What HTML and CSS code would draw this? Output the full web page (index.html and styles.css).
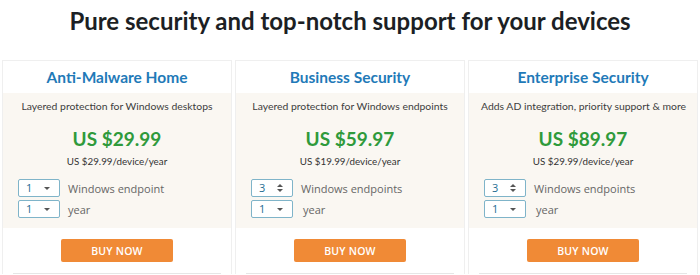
FILE: index.html
```html
<!DOCTYPE html>
<html>
<head>
<meta charset="utf-8">
<link rel="stylesheet" href="styles.css">
</head>
<body>
<h1 class="heading">Pure security and top-notch support for your devices</h1>
<div class="plans">
  <div class="plan">
    <div class="plan-title">Anti-Malware Home</div>
    <div class="plan-body">
      <div class="plan-desc">Layered protection for Windows desktops</div>
      <div class="plan-price">US $29.99</div>
      <div class="plan-unit">US $29.99/device/year</div>
      <div class="opts">
        <div class="opt"><span class="sel">1<span class="arrow"></span></span><span class="opt-label">Windows endpoint</span></div>
        <div class="opt"><span class="sel">1<span class="arrow"></span></span><span class="opt-label">year</span></div>
      </div>
    </div>
    <div class="plan-foot"><button class="buy">BUY NOW</button></div>
  </div>
  <div class="plan">
    <div class="plan-title">Business Security</div>
    <div class="plan-body">
      <div class="plan-desc">Layered protection for Windows endpoints</div>
      <div class="plan-price">US $59.97</div>
      <div class="plan-unit">US $19.99/device/year</div>
      <div class="opts">
        <div class="opt"><span class="sel num">3<span class="spin"><span class="up"></span><span class="dn"></span></span></span><span class="opt-label">Windows endpoints</span></div>
        <div class="opt"><span class="sel">1<span class="arrow"></span></span><span class="opt-label pad">year</span></div>
      </div>
    </div>
    <div class="plan-foot"><button class="buy">BUY NOW</button></div>
  </div>
  <div class="plan">
    <div class="plan-title">Enterprise Security</div>
    <div class="plan-body">
      <div class="plan-desc">Adds AD integration, priority support &amp; more</div>
      <div class="plan-price">US $89.97</div>
      <div class="plan-unit">US $29.99/device/year</div>
      <div class="opts">
        <div class="opt"><span class="sel num">3<span class="spin"><span class="up"></span><span class="dn"></span></span></span><span class="opt-label">Windows endpoints</span></div>
        <div class="opt"><span class="sel">1<span class="arrow"></span></span><span class="opt-label pad">year</span></div>
      </div>
    </div>
    <div class="plan-foot"><button class="buy">BUY NOW</button></div>
  </div>
</div>
</body>
</html>
```
FILE: styles.css
```css
* { box-sizing: border-box; }
body {
  margin: 0;
  background: #fff;
  font-family: "Open Sans", sans-serif;
  color: #444;
}
.heading {
  margin: 0;
  padding-top: 5px;
  height: 60px;
  line-height: 32px;
  text-align: center;
  font-family: Lato, sans-serif;
  font-weight: 700;
  font-size: 24px;
  color: #1c1f24;
}
.plans {
  display: grid;
  grid-template-columns: repeat(3, minmax(0, 1fr));
  gap: 3px;
  padding: 0 2px;
}
.plan {
  border: 1px solid #efefef;
  border-bottom: none;
  display: flex;
  flex-direction: column;
  min-width: 0;
}
.plan-title {
  height: 32px;
  text-align: center;
  font-family: Lato, sans-serif;
  font-weight: 700;
  font-size: 15.5px;
  line-height: 20px;
  color: #1f7ab8;
  padding-top: 6px;
}
.plan-body {
  background: #faf7f2;
  padding: 6px 12px 0;
  height: 135px;
}
.plan-desc {
  text-align: center;
  font-family: Lato, sans-serif;
  font-size: 10.4px;
  line-height: 14px;
  color: #3d3d3d;
  white-space: nowrap;
}
.plan-price {
  text-align: center;
  font-family: Lato, sans-serif;
  font-weight: 700;
  font-size: 19px;
  line-height: 24px;
  color: #2f9a3b;
  margin-top: 14px;
}
.plan-unit {
  text-align: center;
  font-family: Lato, sans-serif;
  font-size: 9.8px;
  line-height: 14px;
  color: #333;
  margin-top: 3px;
}
.opts {
  margin-top: 11px;
  display: flex;
  flex-direction: column;
  gap: 3px;
  padding-left: 3px;
}
.opt {
  display: flex;
  align-items: center;
  gap: 8px;
}
.sel {
  position: relative;
  width: 42px;
  height: 18px;
  border: 1px solid #7fb4c9;
  border-radius: 2px;
  background: #fff;
  font-size: 11px;
  line-height: 16px;
  padding-left: 7px;
  color: #1f6d91;
}
.arrow {
  position: absolute;
  right: 9px;
  top: 7px;
  border-left: 3px solid transparent;
  border-right: 3px solid transparent;
  border-top: 3px solid #555;
}
.spin .up, .spin .dn {
  position: absolute;
  right: 9px;
  border-left: 3px solid transparent;
  border-right: 3px solid transparent;
}
.spin .up { top: 4px; border-bottom: 3px solid #555; }
.spin .dn { top: 9px; border-top: 3px solid #555; }
.opt-label {
  font-size: 11px;
  color: #666;
}
.opt-label.pad { margin-left: 2px; }
.plan-foot {
  padding: 11px 0 11px;
  display: flex;
  justify-content: center;
  border-bottom: 1px solid #e6e6e6;
  margin: 0 10px;
}
.buy {
  width: 112px;
  height: 23px;
  border: none;
  border-radius: 2px;
  background: #f08a36;
  color: #fff;
  font-family: "Open Sans", sans-serif;
  font-weight: 600;
  font-size: 10.5px;
  letter-spacing: 0.2px;
}
```
